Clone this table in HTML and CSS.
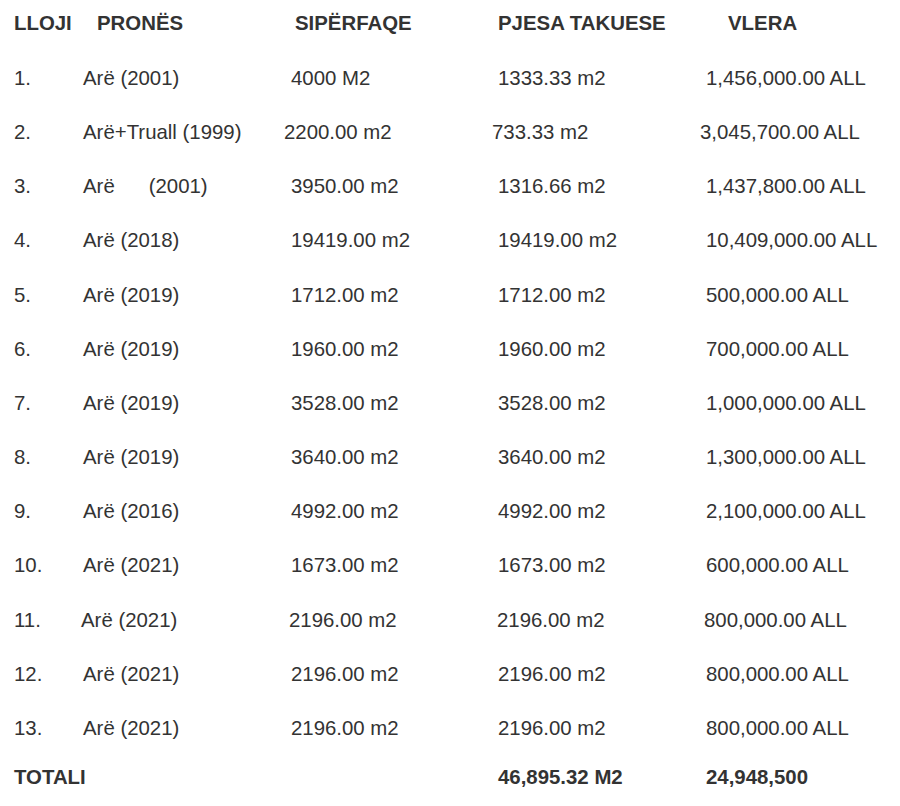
FILE: index.html
```html
<!DOCTYPE html>
<html lang="sq">
<head>
<meta charset="utf-8">
<title>Pronat</title>
<link rel="stylesheet" href="styles.css">
</head>
<body>
<div class="sheet">
  <div class="row head">
    <span class="c1">LLOJI</span>
    <span class="c2 h-pron">PRONËS</span>
    <span class="c3 h-sip">SIPËRFAQE</span>
    <span class="c4">PJESA TAKUESE</span>
    <span class="c5 h-vlera">VLERA</span>
  </div>
  <div class="row"><span>1.</span><span>Arë (2001)</span><span>4000 M2</span><span>1333.33 m2</span><span>1,456,000.00 ALL</span></div>
  <div class="row shift-b"><span>2.</span><span>Arë+Truall (1999)</span><span>2200.00 m2</span><span>733.33 m2</span><span>3,045,700.00 ALL</span></div>
  <div class="row"><span>3.</span><span class="gap">Arë      (2001)</span><span>3950.00 m2</span><span>1316.66 m2</span><span>1,437,800.00 ALL</span></div>
  <div class="row"><span>4.</span><span>Arë (2018)</span><span>19419.00 m2</span><span>19419.00 m2</span><span>10,409,000.00 ALL</span></div>
  <div class="row"><span>5.</span><span>Arë (2019)</span><span>1712.00 m2</span><span>1712.00 m2</span><span>500,000.00 ALL</span></div>
  <div class="row"><span>6.</span><span>Arë (2019)</span><span>1960.00 m2</span><span>1960.00 m2</span><span>700,000.00 ALL</span></div>
  <div class="row"><span>7.</span><span>Arë (2019)</span><span>3528.00 m2</span><span>3528.00 m2</span><span>1,000,000.00 ALL</span></div>
  <div class="row"><span>8.</span><span>Arë (2019)</span><span>3640.00 m2</span><span>3640.00 m2</span><span>1,300,000.00 ALL</span></div>
  <div class="row"><span>9.</span><span>Arë (2016)</span><span>4992.00 m2</span><span>4992.00 m2</span><span>2,100,000.00 ALL</span></div>
  <div class="row"><span>10.</span><span>Arë (2021)</span><span>1673.00 m2</span><span>1673.00 m2</span><span>600,000.00 ALL</span></div>
  <div class="row shift-s"><span>11.</span><span>Arë (2021)</span><span>2196.00 m2</span><span>2196.00 m2</span><span>800,000.00 ALL</span></div>
  <div class="row"><span>12.</span><span>Arë (2021)</span><span>2196.00 m2</span><span>2196.00 m2</span><span>800,000.00 ALL</span></div>
  <div class="row"><span>13.</span><span>Arë (2021)</span><span>2196.00 m2</span><span>2196.00 m2</span><span>800,000.00 ALL</span></div>
  <div class="row total">
    <span class="c1">TOTALI</span>
    <span class="c2"></span>
    <span class="c3"></span>
    <span class="c4">46,895.32 M2</span>
    <span class="c5">24,948,500</span>
  </div>
</div>
</body>
</html>
```
FILE: styles.css
```css
html, body {
  margin: 0;
  padding: 0;
  background: #ffffff;
}

.sheet {
  padding: 8px 0 0 14px;
  font-family: "Liberation Sans", Arial, sans-serif;
  font-size: 20.4px;
  color: #333333;
}

.row {
  display: grid;
  grid-template-columns: 69px 208px 207px 208px 1fr;
  line-height: 54.2px;
  height: 54.2px;
  white-space: nowrap;
}

.row.head {
  font-weight: bold;
  line-height: 30px;
  height: 30px;
  margin-bottom: 12.8px;
}

.h-pron { padding-left: 14px; }
.h-sip { padding-left: 4px; }
.h-vlera { padding-left: 22px; }

.gap { white-space: pre; }

.shift-b span:nth-child(3) { margin-left: -7px; }
.shift-b span:nth-child(4),
.shift-b span:nth-child(5) { margin-left: -6px; }

.shift-s span:nth-child(2),
.shift-s span:nth-child(3),
.shift-s span:nth-child(5) { margin-left: -2px; }
.shift-s span:nth-child(4) { margin-left: -1px; }

.row.total {
  font-weight: bold;
  line-height: 45px;
  height: 45px;
}
```
